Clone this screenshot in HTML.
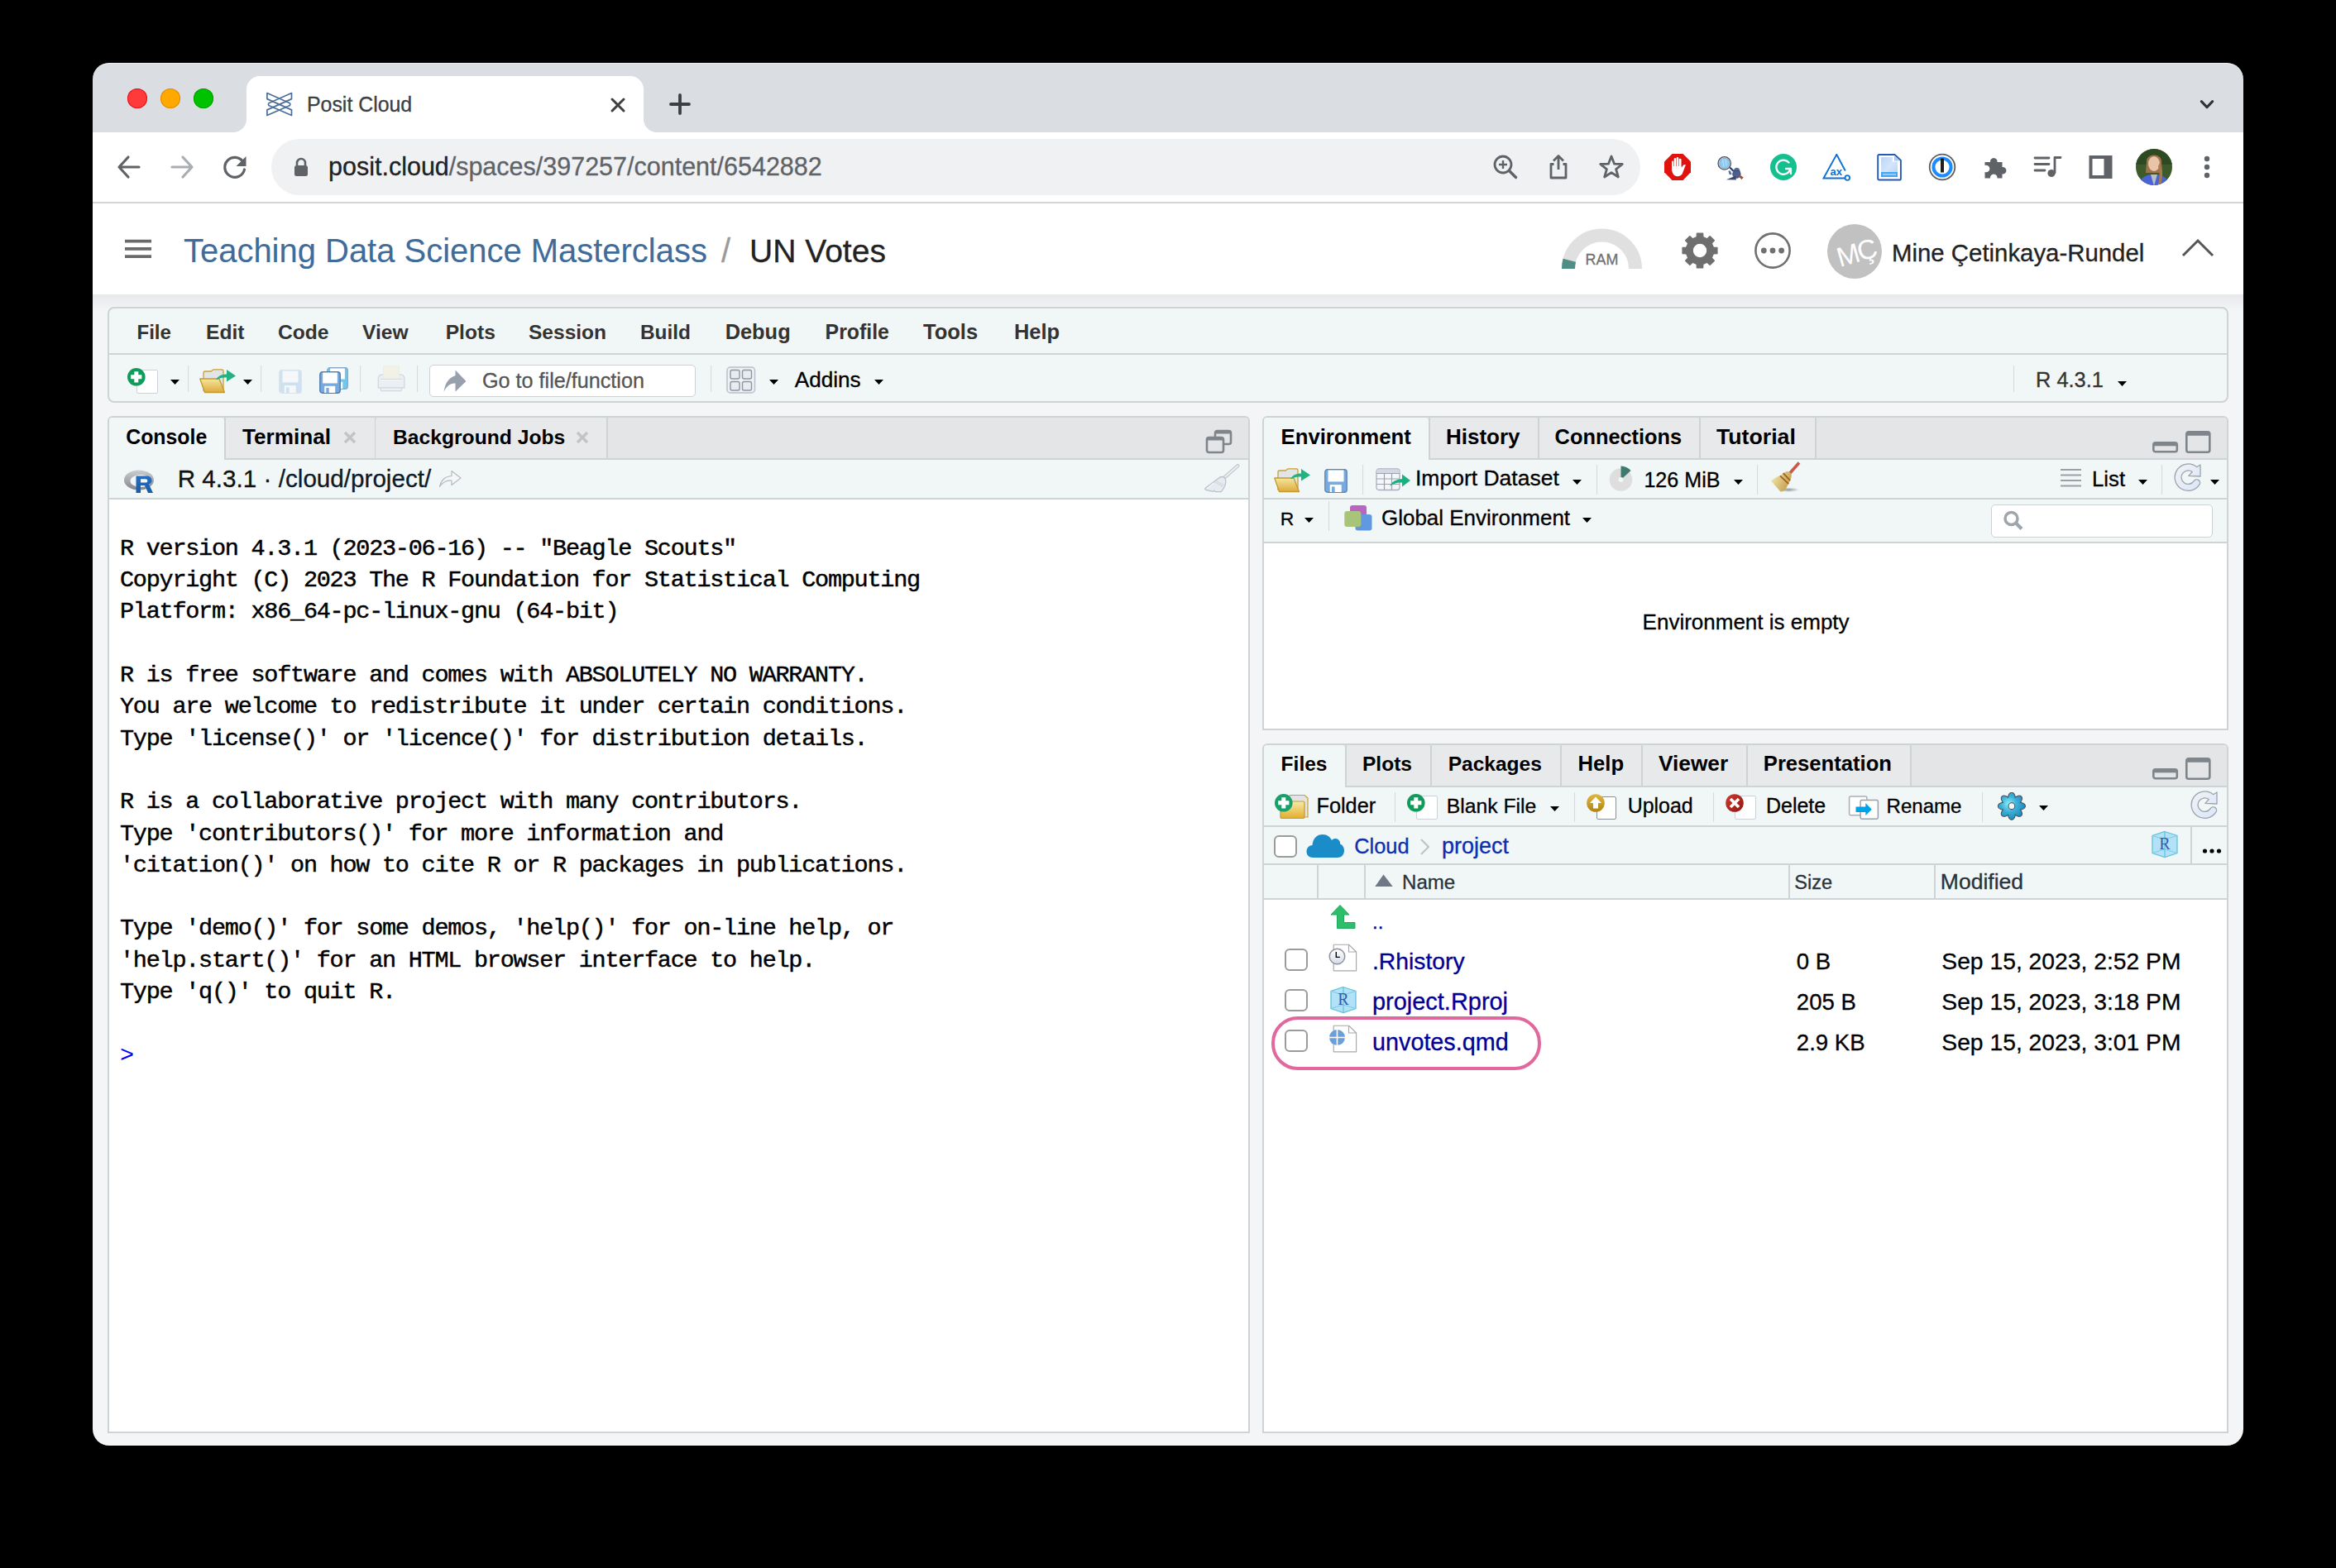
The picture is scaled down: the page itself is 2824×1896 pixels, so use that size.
<!DOCTYPE html><html><head><meta charset="utf-8"><style>html,body{margin:0;padding:0;width:2824px;height:1896px;overflow:hidden;background:#000;position:relative}</style></head><body><div style="position:absolute;left:112px;top:76px;width:2600px;height:84px;background:#DADDE1;border-radius:20px 20px 0 0;box-shadow:inset 0 1px 0 rgba(255,255,255,0.55)"></div>
<div style="position:absolute;left:112px;top:160px;width:2600px;height:84px;background:#fff"></div>
<div style="position:absolute;left:112px;top:244px;width:2600px;height:2px;background:#D3D5D8"></div>
<div style="position:absolute;left:154px;top:107px;width:24px;height:24px;background:#FE3A3A;border-radius:50%;box-shadow:inset 0 0 0 1px #E2131C"></div>
<div style="position:absolute;left:194px;top:107px;width:24px;height:24px;background:#FEA800;border-radius:50%;box-shadow:inset 0 0 0 1px #E48A00"></div>
<div style="position:absolute;left:234px;top:107px;width:24px;height:24px;background:#00C300;border-radius:50%;box-shadow:inset 0 0 0 1px #009D00"></div>
<div style="position:absolute;left:298px;top:92px;width:480px;height:68px;background:#fff;border-radius:16px 16px 0 0"></div>
<svg style="position:absolute;left:282px;top:144px;" width="16" height="16" viewBox="0 0 16 16"><path d="M16 0 V16 H0 A16 16 0 0 0 16 0Z" fill="#fff"/></svg>
<svg style="position:absolute;left:778px;top:144px;" width="16" height="16" viewBox="0 0 16 16"><path d="M0 0 V16 H16 A16 16 0 0 1 0 0Z" fill="#fff"/></svg>
<svg style="position:absolute;left:321px;top:111px;" width="34" height="30" viewBox="0 0 34 30"><path d="M1.9,1.5 L29.35,13.8 Q30.4,15.15 29.35,16.5 L1.9,28.5 V21.85 L31.5,8.6 V1.5 L3.9,13.8 Q2.8,15.15 3.9,16.5 L31.5,28.5 V21.85 L1.9,8.6 Z" fill="none" stroke="#4C6F99" stroke-width="1.7" stroke-linejoin="round"/></svg>
<div style="position:absolute;left:371.00px;top:114px;font:400 24.88px/25px 'Liberation Sans',sans-serif;color:#3C4043;white-space:pre;letter-spacing:0px;-webkit-text-stroke:0.3px #3C4043;">Posit Cloud</div>
<svg style="position:absolute;left:736px;top:116px;" width="22" height="22" viewBox="0 0 22 22"><path d="M4 4 L18 18 M18 4 L4 18" stroke="#3C4043" stroke-width="3" stroke-linecap="round"/></svg>
<svg style="position:absolute;left:808px;top:112px;" width="28" height="28" viewBox="0 0 28 28"><path d="M14 3 V25 M3 14 H25" stroke="#3C4043" stroke-width="3.8" stroke-linecap="round"/></svg>
<svg style="position:absolute;left:2655px;top:118px;" width="26" height="16" viewBox="0 0 26 16"><path d="M6.3 4.6 L13 11.6 L19.7 4.6" fill="none" stroke="#2F3337" stroke-width="3" stroke-linecap="round" stroke-linejoin="round"/></svg>
<svg style="position:absolute;left:140px;top:186px;" width="32" height="32" viewBox="0 0 32 32"><path d="M28 16 H5 M15 4 L4 16 L15 28" fill="none" stroke="#5F6368" stroke-width="3.2" stroke-linecap="round" stroke-linejoin="round"/></svg>
<svg style="position:absolute;left:204px;top:186px;" width="32" height="32" viewBox="0 0 32 32"><path d="M4 16 H27 M17 4 L28 16 L17 28" fill="none" stroke="#AAADB1" stroke-width="3.2" stroke-linecap="round" stroke-linejoin="round"/></svg>
<svg style="position:absolute;left:268px;top:186px;" width="34" height="32" viewBox="0 0 34 32"><path d="M26 10 A12 12 0 1 0 27.5 19" fill="none" stroke="#5F6368" stroke-width="3.2" stroke-linecap="round"/><path d="M29.5 3 V15 H17.5 Z" fill="#5F6368"/></svg>
<div style="position:absolute;left:328px;top:168px;width:1655px;height:68px;background:#EFF1F3;border-radius:34px"></div>
<svg style="position:absolute;left:354px;top:190px;" width="20" height="24" viewBox="0 0 20 24"><path d="M5 10 V7 A5 5 0 0 1 15 7 V10" fill="none" stroke="#5F6368" stroke-width="2.6"/><rect x="2" y="10" width="16" height="13" rx="2.5" fill="#5F6368"/></svg>
<div style="position:absolute;left:397.00px;top:186px;font:400 30.50px/31px 'Liberation Sans',sans-serif;color:#202124;white-space:pre;letter-spacing:0px;-webkit-text-stroke:0.3px #202124;">posit.cloud</div>
<div style="position:absolute;left:542.66px;top:186px;font:400 30.50px/31px 'Liberation Sans',sans-serif;color:#5F6368;white-space:pre;letter-spacing:0px;-webkit-text-stroke:0.3px #5F6368;">/spaces/397257/content/6542882</div>
<svg style="position:absolute;left:1804px;top:186px;" width="32" height="32" viewBox="0 0 32 32"><circle cx="13" cy="13" r="10" fill="none" stroke="#5F6368" stroke-width="2.8"/><path d="M13 8 V18 M8 13 H18" stroke="#5F6368" stroke-width="2.4"/><path d="M20.5 20.5 L28.5 28.5" stroke="#5F6368" stroke-width="3.4" stroke-linecap="round"/></svg>
<svg style="position:absolute;left:1870px;top:186px;" width="28" height="32" viewBox="0 0 28 32"><path d="M14 3 V19 M8 8.5 L14 2.5 L20 8.5" fill="none" stroke="#5F6368" stroke-width="2.8" stroke-linejoin="round"/><path d="M8.5 12.5 H5 V29 H23 V12.5 H19.5" fill="none" stroke="#5F6368" stroke-width="2.8" stroke-linejoin="round"/></svg>
<svg style="position:absolute;left:1932px;top:186px;" width="32" height="32" viewBox="0 0 32 32"><path d="M16 3 L19.6 12.2 L29.3 12.5 L21.6 18.6 L24.3 28 L16 22.6 L7.7 28 L10.4 18.6 L2.7 12.5 L12.4 12.2 Z" fill="none" stroke="#5F6368" stroke-width="2.8" stroke-linejoin="round"/></svg>
<svg style="position:absolute;left:2012px;top:186px;" width="32" height="32" viewBox="0 0 32 32"><path d="M9.5 0 H22.5 L32 9.5 V22.3 L22.5 32 H9.5 L0 22.3 V9.5 Z" fill="#E0130F"/><g fill="#fff"><rect x="9" y="8.6" width="2.3" height="12" rx="1.15"/><rect x="11.75" y="4.9" width="2.45" height="15" rx="1.2"/><rect x="14.7" y="3.9" width="2.5" height="16" rx="1.25"/><rect x="17.7" y="5.7" width="2.85" height="14" rx="1.4"/><path d="M9 14.9 H20.55 V16.9 L23 13.6 Q24.6 12.5 25.9 13.2 L21.7 24.2 Q19.6 27.3 15.6 27.2 Q11.8 27.1 10.2 23.6 Q9 21 9 18 Z"/></g></svg>
<svg style="position:absolute;left:2074px;top:186px;" width="36" height="34" viewBox="0 0 36 34"><circle cx="10.7" cy="11.4" r="7.7" fill="#DCE7F7" stroke="#4A4F5A" stroke-width="1.3"/><circle cx="10.7" cy="11.4" r="6.1" fill="#8CCDF0" stroke="#6E8FB8" stroke-width="0.6"/><path d="M8.5 6.5 L9.8 15.5 M12 6.3 L13.2 14.5" stroke="#C9E8FA" stroke-width="1" opacity="0.8"/><path d="M17.2 16.5 L21.8 21" stroke="#2C3E6B" stroke-width="2.3"/><path d="M15.4 20.8 Q16.8 19.4 18.3 21.5 L19.6 24.6 Q18 26.2 16.4 24.6Z" fill="#5F709E"/><ellipse cx="25.6" cy="21.3" rx="4" ry="4.6" fill="#5C6D9B"/><circle cx="25.4" cy="24.6" r="4.7" fill="#4F5F8C" stroke="#2E3B63" stroke-width="0.8"/><path d="M12.8 31.3 L23.8 26.8 L25 31.6 Z" fill="#3C4A72"/><path d="M29.4 25.4 L33.8 28.6 L31.4 31.1 L28.4 28 Z" fill="#A9502A"/></svg>
<svg style="position:absolute;left:2140px;top:186px;" width="32" height="32" viewBox="0 0 32 32"><circle cx="16" cy="16" r="16" fill="#15C08F"/><path d="M22.5 10.5 A8.6 8.6 0 1 0 24.4 18" fill="none" stroke="#fff" stroke-width="2.3" stroke-linecap="round"/><path d="M19 18 H25 V24" fill="none" stroke="#fff" stroke-width="2.3" stroke-linecap="round" stroke-linejoin="round"/></svg>
<svg style="position:absolute;left:2203px;top:186px;" width="36" height="34" viewBox="0 0 36 34"><path d="M27.8 20.5 L17.3 0.8 L1.5 29.5 H27" fill="none" stroke="#0E6FD2" stroke-width="1.9" stroke-linejoin="miter"/><circle cx="30.3" cy="29" r="2.8" fill="none" stroke="#0E6FD2" stroke-width="1.8"/><text x="9.6" y="25.8" font-family="Liberation Sans" font-weight="700" font-size="13" fill="#0E6FD2">ax</text></svg>
<svg style="position:absolute;left:2269px;top:186px;" width="30" height="33" viewBox="0 0 30 33"><defs><linearGradient id="dg" x1="0" y1="0" x2="1" y2="1"><stop offset="0" stop-color="#BCD6F6"/><stop offset="0.5" stop-color="#D4E5FB"/><stop offset="1" stop-color="#B3D0F3"/></linearGradient></defs><path d="M1.2,2.6 Q1.2,1 2.8,1 H21.5 L28.9,7.8 V29.9 Q28.9,31.5 27.3,31.5 H2.8 Q1.2,31.5 1.2,29.9 Z" fill="#fff" stroke="#2459B8" stroke-width="1.9"/><path d="M5,4 H18.8 V9.6 H25 V28 H5Z" fill="url(#dg)"/><path d="M21 2 L28 8.5 H21Z" fill="#A9CBF2"/><rect x="5" y="22" width="20" height="6" fill="#42A5F5"/><rect x="7" y="24" width="16" height="1.7" fill="#9AD4FF"/></svg>
<svg style="position:absolute;left:2331px;top:185px;" width="34" height="34" viewBox="0 0 34 34"><circle cx="17" cy="17" r="15.3" fill="#fff" stroke="#5C5C5C" stroke-width="1.8"/><circle cx="17" cy="17" r="10.6" fill="#fff" stroke="#1A8CFF" stroke-width="4"/><rect x="15" y="6.5" width="4" height="17" fill="#1F1F1F"/></svg>
<svg style="position:absolute;left:2397px;top:186px;" width="32" height="32" viewBox="0 0 32 32"><path d="M2.5 10 H9 A4.3 4.3 0 1 1 17.5 10 H23.5 V16 A4.3 4.3 0 1 1 23.5 24.5 V29.5 H17.5 A4.3 4.3 0 1 0 9 29.5 H2.5 V22 A4.3 4.3 0 1 0 2.5 14 Z" fill="#5F6368"/></svg>
<svg style="position:absolute;left:2458px;top:188px;" width="36" height="28" viewBox="0 0 36 28"><path d="M2 3 H19 M2 10.5 H19 M2 18 H14" stroke="#5F6368" stroke-width="2.8" stroke-linecap="round"/><path d="M26 21 V2.5 H33" fill="none" stroke="#5F6368" stroke-width="2.8" stroke-linecap="round" stroke-linejoin="round"/><circle cx="22" cy="21.5" r="4.6" fill="#5F6368"/></svg>
<svg style="position:absolute;left:2524px;top:186px;" width="32" height="32" viewBox="0 0 32 32"><rect x="1.5" y="2" width="28" height="28" fill="#5F6368"/><rect x="5.5" y="6" width="14" height="20" fill="#fff"/></svg>
<svg style="position:absolute;left:2581px;top:179px;" width="46" height="46" viewBox="0 0 46 46"><defs><clipPath id="av"><circle cx="23" cy="23" r="22"/></clipPath></defs><g clip-path="url(#av)"><rect width="46" height="46" fill="#3C5A2A"/><rect x="0" y="0" width="46" height="20" fill="#2E4A22"/><path d="M14 16 C14 6 32 6 32 16 L33 30 L13 30Z" fill="#9C7550"/><ellipse cx="23" cy="19" rx="7" ry="9" fill="#E9C4A8"/><path d="M3 46 C6 35 14 32 23 32 C32 32 40 35 43 46Z" fill="#4A63D6"/><path d="M19 32 L23 46 L27 32Z" fill="#B8BDC8"/><path d="M30 18 C34 26 34 36 31 44 L28 44 C30 36 30 28 28 22Z" fill="#A77A4E"/></g></svg>
<svg style="position:absolute;left:2662px;top:186px;" width="12" height="32" viewBox="0 0 12 32"><circle cx="6" cy="6" r="3.2" fill="#5F6368"/><circle cx="6" cy="16" r="3.2" fill="#5F6368"/><circle cx="6" cy="26" r="3.2" fill="#5F6368"/></svg>
<div style="position:absolute;left:112px;top:246px;width:2600px;height:110px;background:#fff"></div>
<div style="position:absolute;left:112px;top:356px;width:2600px;height:1392px;background:#F4F5F7;border-radius:0 0 20px 20px"></div>
<div style="position:absolute;left:112px;top:356px;width:2600px;height:20px;background:linear-gradient(#E7E8EB,#F4F5F7)"></div>
<svg style="position:absolute;left:150px;top:286px;" width="34" height="28" viewBox="0 0 34 28"><path d="M1 5.7 H33 M1 14.9 H33 M1 24.1 H33" stroke="#6A6A6A" stroke-width="3.8"/></svg>
<div style="position:absolute;left:222.00px;top:283px;font:400 39.96px/40px 'Liberation Sans',sans-serif;color:#3F6C9B;white-space:pre;letter-spacing:0px;-webkit-text-stroke:0.1px #3F6C9B;">Teaching Data Science Masterclass</div>
<div style="position:absolute;left:872.00px;top:283px;font:400 40.00px/40px 'Liberation Sans',sans-serif;color:#9A9A9A;white-space:pre;letter-spacing:0px;-webkit-text-stroke:0.3px #9A9A9A;">/</div>
<div style="position:absolute;left:906.00px;top:284px;font:400 39.06px/39px 'Liberation Sans',sans-serif;color:#222;white-space:pre;letter-spacing:0px;-webkit-text-stroke:0.3px #222;">UN Votes</div>
<svg style="position:absolute;left:1880px;top:270px;" width="112" height="62" viewBox="0 0 112 62"><path d="M16 55 A40.5 40.5 0 0 1 97 55" fill="none" stroke="#E0E0E0" stroke-width="16"/><path d="M16 55 A40.5 40.5 0 0 1 17.3 44.8" fill="none" stroke="#4E8F85" stroke-width="16"/></svg>
<div style="position:absolute;left:1916.60px;top:305px;font:400 17.88px/18px 'Liberation Sans',sans-serif;color:#707070;white-space:pre;letter-spacing:0px;-webkit-text-stroke:0.3px #707070;">RAM</div>
<svg style="position:absolute;left:2032px;top:280px;" width="46" height="46" viewBox="0 0 46 46"><path d="M19.34,2.02 L26.66,2.02 L26.92,6.66 L31.78,8.68 L35.25,5.57 L40.43,10.75 L37.32,14.22 L39.34,19.08 L43.98,19.34 L43.98,26.66 L39.34,26.92 L37.32,31.78 L40.43,35.25 L35.25,40.43 L31.78,37.32 L26.92,39.34 L26.66,43.98 L19.34,43.98 L19.08,39.34 L14.22,37.32 L10.75,40.43 L5.57,35.25 L8.68,31.78 L6.66,26.92 L2.02,26.66 L2.02,19.34 L6.66,19.08 L8.68,14.22 L5.57,10.75 L10.75,5.57 L14.22,8.68 L19.08,6.66 Z M31.8,23 A8.8 8.8 0 1 0 14.2,23 A8.8 8.8 0 1 0 31.8,23Z" fill="#6E6E6E" fill-rule="evenodd" stroke="#6E6E6E" stroke-width="1.2" stroke-linejoin="round"/></svg>
<svg style="position:absolute;left:2120px;top:280px;" width="46" height="46" viewBox="0 0 46 46"><circle cx="23" cy="23" r="20.6" fill="none" stroke="#707070" stroke-width="2.6"/><circle cx="12.3" cy="23" r="3.4" fill="#707070"/><circle cx="23" cy="23" r="3.4" fill="#707070"/><circle cx="33.6" cy="23" r="3.4" fill="#707070"/></svg>
<div style="position:absolute;left:2209px;top:271px;width:66px;height:66px;background:#C1C1C1;border-radius:50%"></div>
<div style="position:absolute;left:2214px;top:286px;width:60px;height:40px;font:400 33px/40px 'Liberation Sans',sans-serif;color:#fff;transform:rotate(-16deg);transform-origin:50% 50%;text-align:center;letter-spacing:-2px">MÇ</div>
<div style="position:absolute;left:2287.00px;top:291px;font:400 29.38px/29px 'Liberation Sans',sans-serif;color:#222;white-space:pre;letter-spacing:0px;-webkit-text-stroke:0.3px #222;">Mine Çetinkaya-Rundel</div>
<svg style="position:absolute;left:2636px;top:286px;" width="42" height="28" viewBox="0 0 42 28"><path d="M3 23 L21 5 L39 23" fill="none" stroke="#555" stroke-width="3"/></svg>
<div style="position:absolute;left:130px;top:371px;width:2564px;height:116px;background:#F1F6F6;border:2px solid #CED3D6;border-radius:8px;box-sizing:border-box"></div>
<div style="position:absolute;left:132px;top:427px;width:2560px;height:2px;background:#CED3D6"></div>
<div style="position:absolute;left:165.50px;top:390px;font:700 24.06px/24px 'Liberation Sans',sans-serif;color:#333;white-space:pre;letter-spacing:0px;">File</div>
<div style="position:absolute;left:249.00px;top:389px;font:700 24.60px/25px 'Liberation Sans',sans-serif;color:#333;white-space:pre;letter-spacing:0px;">Edit</div>
<div style="position:absolute;left:336.00px;top:389px;font:700 24.60px/25px 'Liberation Sans',sans-serif;color:#333;white-space:pre;letter-spacing:0px;">Code</div>
<div style="position:absolute;left:438.00px;top:389px;font:700 24.60px/25px 'Liberation Sans',sans-serif;color:#333;white-space:pre;letter-spacing:0px;">View</div>
<div style="position:absolute;left:538.70px;top:389px;font:700 24.60px/25px 'Liberation Sans',sans-serif;color:#333;white-space:pre;letter-spacing:0px;">Plots</div>
<div style="position:absolute;left:639.00px;top:389px;font:700 24.54px/25px 'Liberation Sans',sans-serif;color:#333;white-space:pre;letter-spacing:0px;">Session</div>
<div style="position:absolute;left:774.00px;top:390px;font:700 24.40px/24px 'Liberation Sans',sans-serif;color:#333;white-space:pre;letter-spacing:0px;">Build</div>
<div style="position:absolute;left:876.70px;top:389px;font:700 25.38px/25px 'Liberation Sans',sans-serif;color:#333;white-space:pre;letter-spacing:0px;">Debug</div>
<div style="position:absolute;left:997.60px;top:389px;font:700 24.85px/25px 'Liberation Sans',sans-serif;color:#333;white-space:pre;letter-spacing:0px;">Profile</div>
<div style="position:absolute;left:1116.00px;top:388px;font:700 25.52px/26px 'Liberation Sans',sans-serif;color:#333;white-space:pre;letter-spacing:0px;">Tools</div>
<div style="position:absolute;left:1226.00px;top:389px;font:700 25.40px/25px 'Liberation Sans',sans-serif;color:#333;white-space:pre;letter-spacing:0px;">Help</div>
<div style="position:absolute;left:165px;top:447px;width:26px;height:29px;background:#fff;border:1.5px solid #CDD2DA;border-radius:2px;box-sizing:border-box"></div>
<svg style="position:absolute;left:152.89999999999998px;top:443.7px;" width="23.6" height="23.6" viewBox="0 0 23.6 23.6"><circle cx="11.8" cy="11.8" r="10.8" fill="#0F9B5A"/><path d="M11.8 5.200000000000001 V18.4 M5.200000000000001 11.8 H18.4" stroke="#fff" stroke-width="5"/></svg>
<svg style="position:absolute;left:206px;top:459px;" width="11" height="6" viewBox="0 0 11 6"><path d="M0 0 H11 L5.5 6Z" fill="#000"/></svg>
<div style="position:absolute;left:227px;top:442px;width:2px;height:32px;background:linear-gradient(90deg,#C9CED2,#FFFFFF)"></div>
<svg style="position:absolute;left:241px;top:446px;" width="46" height="30" viewBox="0 0 46 30"><defs><linearGradient id="fg" x1="0" y1="0" x2="0" y2="1"><stop offset="0" stop-color="#F5E6A0"/><stop offset="1" stop-color="#DDAA3A"/></linearGradient></defs><path d="M5 26 V5 Q5 3 7 3 H14 L17 0.8 H27 Q29 0.8 29 3 V26Z" fill="#E3E4E6" stroke="#C9A032" stroke-width="1.3"/><path d="M0.8 12 H24 L30.5 28.5 H6.5Z" fill="url(#fg)" stroke="#C29A30" stroke-width="1.3" stroke-linejoin="round"/><path d="M20 13 Q24 6 33 6.5 V1 L44 8.5 L33 15.5 V10.5 Q25 10 22 13Z" fill="#23B383"/></svg>
<svg style="position:absolute;left:294px;top:459px;" width="11" height="6" viewBox="0 0 11 6"><path d="M0 0 H11 L5.5 6Z" fill="#000"/></svg>
<div style="position:absolute;left:315px;top:442px;width:2px;height:32px;background:linear-gradient(90deg,#C9CED2,#FFFFFF)"></div>
<svg style="position:absolute;left:337px;top:447px;" width="28" height="29" viewBox="0 0 28 29"><rect x="0.8" y="0.8" width="26.4" height="27.4" rx="3" fill="#CFE1F1" stroke="#D6E3EE" stroke-width="1.4"/><rect x="4.48" y="1.5" width="19.040000000000003" height="13.92" fill="#F4F8FB"/><rect x="6.72" y="19.14" width="14.0" height="8.860000000000001" fill="#F4F8FB"/><rect x="8.96" y="21.46" width="3.64" height="6.54" fill="#CFE1F1"/></svg>
<svg style="position:absolute;left:395px;top:444px;" width="26" height="27" viewBox="0 0 26 27"><rect x="0.8" y="0.8" width="24.4" height="25.4" rx="3" fill="#6FC9EF" stroke="#8AA6C2" stroke-width="1.4"/><rect x="4.16" y="1.5" width="17.68" height="12.959999999999999" fill="#fff"/><rect x="6.24" y="17.82" width="13.0" height="8.180000000000001" fill="#fff"/><rect x="8.32" y="19.98" width="3.38" height="6.0200000000000005" fill="#6FC9EF"/></svg>
<svg style="position:absolute;left:386px;top:449px;" width="26" height="27" viewBox="0 0 26 27"><rect x="0.8" y="0.8" width="24.4" height="25.4" rx="3" fill="#77A9DC" stroke="#4F7CAE" stroke-width="1.4"/><rect x="4.16" y="1.5" width="17.68" height="12.959999999999999" fill="#fff"/><rect x="6.24" y="17.82" width="13.0" height="8.180000000000001" fill="#fff"/><rect x="8.32" y="19.98" width="3.38" height="6.0200000000000005" fill="#77A9DC"/></svg>
<div style="position:absolute;left:435px;top:442px;width:2px;height:32px;background:linear-gradient(90deg,#C9CED2,#FFFFFF)"></div>
<svg style="position:absolute;left:456px;top:442px;" width="34" height="32" viewBox="0 0 34 32"><path d="M1.3 27 V16 Q1.3 11 6 10.8 H28 Q32.8 11 32.8 16 V27 Z" fill="#EBEFF4" stroke="#D3D8DE" stroke-width="1.3"/><rect x="7.6" y="0.6" width="18.6" height="15.4" rx="0.8" fill="#F2F1E6" stroke="#ECEBDD" stroke-width="0.8"/><path d="M4 16.6 H30" stroke="#D3D8DF" stroke-width="1"/><path d="M4 17.8 H30" stroke="#F8FAFC" stroke-width="1"/><rect x="4.4" y="27" width="25" height="3.6" rx="0.8" fill="#EDF0F4" stroke="#D3D8DE" stroke-width="1.1"/></svg>
<div style="position:absolute;left:504px;top:442px;width:2px;height:32px;background:linear-gradient(90deg,#C9CED2,#FFFFFF)"></div>
<div style="position:absolute;left:519px;top:441px;width:322px;height:39px;background:#fff;border:1.6px solid #CDD2D5;border-radius:5px;box-sizing:border-box"></div>
<svg style="position:absolute;left:535px;top:446px;" width="32" height="30" viewBox="0 0 32 30"><path d="M1.5 28 C3 18 7 11 14.5 8.5 C16 8 17.5 8 15.5 8 V1.5 L28.5 15 L15.5 27.5 V17.5 C9 17 4.5 21.5 1.5 28Z" fill="#98A0AD"/></svg>
<div style="position:absolute;left:583.00px;top:448px;font:400 25.18px/25px 'Liberation Sans',sans-serif;color:#555;white-space:pre;letter-spacing:0px;-webkit-text-stroke:0.3px #555;">Go to file/function</div>
<div style="position:absolute;left:859px;top:442px;width:2px;height:32px;background:linear-gradient(90deg,#C9CED2,#FFFFFF)"></div>
<svg style="position:absolute;left:878px;top:443px;" width="36" height="33" viewBox="0 0 36 33"><rect x="1" y="1" width="33.5" height="31" rx="4" fill="#EEF1F4" stroke="#BAC0C8" stroke-width="1.5"/><rect x="5" y="4.5" width="11" height="10.5" rx="2" fill="#E8ECF0" stroke="#8D96A2" stroke-width="1.4"/><rect x="19.5" y="4.5" width="11" height="10.5" rx="2" fill="#E8ECF0" stroke="#8D96A2" stroke-width="1.4"/><rect x="5" y="18.5" width="11" height="10.5" rx="2" fill="#E8ECF0" stroke="#8D96A2" stroke-width="1.4"/><rect x="19.5" y="18.5" width="11" height="10.5" rx="2" fill="#E8ECF0" stroke="#8D96A2" stroke-width="1.4"/></svg>
<svg style="position:absolute;left:930px;top:459px;" width="11" height="6" viewBox="0 0 11 6"><path d="M0 0 H11 L5.5 6Z" fill="#000"/></svg>
<div style="position:absolute;left:960.80px;top:446px;font:400 26.13px/26px 'Liberation Sans',sans-serif;color:#000;white-space:pre;letter-spacing:0px;-webkit-text-stroke:0.3px #000;">Addins</div>
<svg style="position:absolute;left:1057px;top:459px;" width="11" height="6" viewBox="0 0 11 6"><path d="M0 0 H11 L5.5 6Z" fill="#000"/></svg>
<div style="position:absolute;left:2434px;top:442px;width:2px;height:32px;background:linear-gradient(90deg,#C9CED2,#FFFFFF)"></div>
<div style="position:absolute;left:2461.00px;top:447px;font:400 25.43px/25px 'Liberation Sans',sans-serif;color:#333;white-space:pre;letter-spacing:0px;-webkit-text-stroke:0.3px #333;">R 4.3.1</div>
<svg style="position:absolute;left:2560px;top:461px;" width="11" height="6" viewBox="0 0 11 6"><path d="M0 0 H11 L5.5 6Z" fill="#000"/></svg>
<div style="position:absolute;left:130px;top:503px;width:1381px;height:1230px;background:#fff;border:2px solid #CED3D6;border-radius:6px 6px 0 0;box-sizing:border-box;overflow:hidden"></div>
<div style="position:absolute;left:132px;top:505px;width:1377px;height:49px;background:#E4E5E7;border-radius:4px 4px 0 0"></div>
<div style="position:absolute;left:132px;top:554px;width:1377px;height:2px;background:#CED3D6"></div>
<div style="position:absolute;left:132px;top:505px;width:139px;height:51px;background:#F1F6F6;border-radius:4px 4px 0 0"></div>
<div style="position:absolute;left:271px;top:505px;width:2px;height:49px;background:#CED3D6;border-radius:2px 2px 0 0"></div>
<div style="position:absolute;left:273px;top:505px;width:179.5px;height:49px;background:#E8E9EB;border-radius:4px 4px 0 0"></div>
<div style="position:absolute;left:452.5px;top:505px;width:2.0px;height:49px;background:#CED3D6;border-radius:2px 2px 0 0"></div>
<div style="position:absolute;left:454px;top:505px;width:279px;height:49px;background:#E8E9EB;border-radius:4px 4px 0 0"></div>
<div style="position:absolute;left:733px;top:505px;width:2px;height:49px;background:#CED3D6;border-radius:2px 2px 0 0"></div>
<div style="position:absolute;left:132px;top:556px;width:1377px;height:46px;background:#F1F6F6"></div>
<div style="position:absolute;left:132px;top:602px;width:1377px;height:2px;background:#CED3D6"></div>
<div style="position:absolute;left:152.20px;top:516px;font:700 24.87px/25px 'Liberation Sans',sans-serif;color:#000;white-space:pre;letter-spacing:0px;">Console</div>
<div style="position:absolute;left:293.00px;top:515px;font:700 26.14px/26px 'Liberation Sans',sans-serif;color:#000;white-space:pre;letter-spacing:0px;">Terminal</div>
<div style="position:absolute;left:475.00px;top:516px;font:700 24.66px/25px 'Liberation Sans',sans-serif;color:#000;white-space:pre;letter-spacing:0px;">Background Jobs</div>
<svg style="position:absolute;left:414.5px;top:521px;" width="16" height="16" viewBox="0 0 16 16"><path d="M2 2 L14 14 M14 2 L2 14" stroke="#C4C4C4" stroke-width="3.4"/></svg>
<svg style="position:absolute;left:695.5px;top:521px;" width="16" height="16" viewBox="0 0 16 16"><path d="M2 2 L14 14 M14 2 L2 14" stroke="#C4C4C4" stroke-width="3.4"/></svg>
<svg style="position:absolute;left:1456px;top:518px;" width="36" height="32" viewBox="0 0 36 32"><rect x="13" y="3" width="19" height="16" rx="2.5" fill="none" stroke="#7E868C" stroke-width="2.6"/><rect x="3" y="11" width="20" height="18" rx="2.5" fill="#E4E5E7" stroke="#7E868C" stroke-width="2.6"/><rect x="13" y="3" width="19" height="3.5" fill="#7E868C"/><rect x="3" y="11" width="20" height="3.5" fill="#7E868C"/></svg>
<svg style="position:absolute;left:148px;top:566px;" width="40" height="32" viewBox="0 0 40 32"><defs><linearGradient id="rg" x1="0" y1="0" x2="0" y2="1"><stop offset="0" stop-color="#CBCED0"/><stop offset="1" stop-color="#84858B"/></linearGradient><linearGradient id="rb" x1="0" y1="0" x2="0" y2="1"><stop offset="0" stop-color="#276DC3"/><stop offset="1" stop-color="#165CAA"/></linearGradient></defs><ellipse cx="20" cy="14.5" rx="18" ry="12" fill="url(#rg)"/><ellipse cx="22" cy="15.5" rx="12.5" ry="7.5" fill="#F1F6F6"/><path d="M16.5 9.5 H28.5 C33 9.5 35.5 11.5 35.5 15 C35.5 17.5 34 19 32 19.8 L37 30 H31 L27 21 H22 V30 H16.5Z M22 13.3 V17.5 H28 C29.5 17.5 30.3 16.7 30.3 15.4 C30.3 14 29.5 13.3 28 13.3Z" fill="url(#rb)" fill-rule="evenodd"/></svg>
<div style="position:absolute;left:214.70px;top:564px;font:400 29.63px/30px 'Liberation Sans',sans-serif;color:#111;white-space:pre;letter-spacing:0px;-webkit-text-stroke:0.3px #111;">R 4.3.1 · </div>
<div style="position:absolute;left:336.77px;top:564px;font:400 29.63px/30px 'Liberation Sans',sans-serif;color:#0B1B2B;white-space:pre;letter-spacing:0px;-webkit-text-stroke:0.3px #0B1B2B;">/cloud/project/</div>
<svg style="position:absolute;left:530px;top:567px;" width="29" height="23" viewBox="0 0 29 23"><path d="M1.5 21.5 C3 14 8 9 16 8.5 V2.5 L27 11 L16 19.5 V14 C10 13.5 5 16.5 1.5 21.5Z" fill="#F4F6F8" stroke="#B5BAC2" stroke-width="1.2" stroke-linejoin="round"/></svg>
<svg style="position:absolute;left:1454px;top:560px;" width="46" height="38" viewBox="0 0 46 38"><path d="M42.4 3.2 L26.3 17.3" stroke="#BFC6CC" stroke-width="4.2" stroke-linecap="round"/><path d="M42.4 3.2 L26.3 17.3" stroke="#ECEFF4" stroke-width="2" stroke-linecap="round"/><path d="M25.8 16.8 Q21.5 15.8 19.2 18.3 L3.2 30.2 Q2 32 4.6 32.6 L12.4 34.4 L13.6 33.2 L15.2 34.6 H22 Q24.2 33 26.8 27.2 Q28.6 22.2 27.2 19.2 Z" fill="#E6EAF1" stroke="#BAC2C9" stroke-width="1.3" stroke-linejoin="round"/><path d="M14.8 23 L24.2 28.4 M16.2 21.6 L25.4 26.8" stroke="#D3D8DE" stroke-width="1.2"/><path d="M13 24 L5 31" stroke="#fff" stroke-width="1"/></svg>
<div style="position:absolute;left:145px;top:649.8px;font:400 28.5px/28px 'Liberation Mono',monospace;letter-spacing:-1.253px;color:#000;white-space:pre;-webkit-text-stroke:0.45px #000">R version 4.3.1 (2023-06-16) -- &quot;Beagle Scouts&quot;</div>
<div style="position:absolute;left:145px;top:688.1px;font:400 28.5px/28px 'Liberation Mono',monospace;letter-spacing:-1.253px;color:#000;white-space:pre;-webkit-text-stroke:0.45px #000">Copyright (C) 2023 The R Foundation for Statistical Computing</div>
<div style="position:absolute;left:145px;top:726.4px;font:400 28.5px/28px 'Liberation Mono',monospace;letter-spacing:-1.253px;color:#000;white-space:pre;-webkit-text-stroke:0.45px #000">Platform: x86_64-pc-linux-gnu (64-bit)</div>
<div style="position:absolute;left:145px;top:803.0px;font:400 28.5px/28px 'Liberation Mono',monospace;letter-spacing:-1.253px;color:#000;white-space:pre;-webkit-text-stroke:0.45px #000">R is free software and comes with ABSOLUTELY NO WARRANTY.</div>
<div style="position:absolute;left:145px;top:841.3px;font:400 28.5px/28px 'Liberation Mono',monospace;letter-spacing:-1.253px;color:#000;white-space:pre;-webkit-text-stroke:0.45px #000">You are welcome to redistribute it under certain conditions.</div>
<div style="position:absolute;left:145px;top:879.6px;font:400 28.5px/28px 'Liberation Mono',monospace;letter-spacing:-1.253px;color:#000;white-space:pre;-webkit-text-stroke:0.45px #000">Type &#x27;license()&#x27; or &#x27;licence()&#x27; for distribution details.</div>
<div style="position:absolute;left:145px;top:956.2px;font:400 28.5px/28px 'Liberation Mono',monospace;letter-spacing:-1.253px;color:#000;white-space:pre;-webkit-text-stroke:0.45px #000">R is a collaborative project with many contributors.</div>
<div style="position:absolute;left:145px;top:994.5px;font:400 28.5px/28px 'Liberation Mono',monospace;letter-spacing:-1.253px;color:#000;white-space:pre;-webkit-text-stroke:0.45px #000">Type &#x27;contributors()&#x27; for more information and</div>
<div style="position:absolute;left:145px;top:1032.8px;font:400 28.5px/28px 'Liberation Mono',monospace;letter-spacing:-1.253px;color:#000;white-space:pre;-webkit-text-stroke:0.45px #000">&#x27;citation()&#x27; on how to cite R or R packages in publications.</div>
<div style="position:absolute;left:145px;top:1109.4px;font:400 28.5px/28px 'Liberation Mono',monospace;letter-spacing:-1.253px;color:#000;white-space:pre;-webkit-text-stroke:0.45px #000">Type &#x27;demo()&#x27; for some demos, &#x27;help()&#x27; for on-line help, or</div>
<div style="position:absolute;left:145px;top:1147.7px;font:400 28.5px/28px 'Liberation Mono',monospace;letter-spacing:-1.253px;color:#000;white-space:pre;-webkit-text-stroke:0.45px #000">&#x27;help.start()&#x27; for an HTML browser interface to help.</div>
<div style="position:absolute;left:145px;top:1186.0px;font:400 28.5px/28px 'Liberation Mono',monospace;letter-spacing:-1.253px;color:#000;white-space:pre;-webkit-text-stroke:0.45px #000">Type &#x27;q()&#x27; to quit R.</div>
<div style="position:absolute;left:145px;top:1262.6px;font:400 28.5px/28px 'Liberation Mono',monospace;color:#0000FF;white-space:pre">&gt;</div>
<div style="position:absolute;left:1526px;top:503px;width:1168px;height:380px;background:#fff;border:2px solid #CED3D6;border-radius:6px 6px 0 0;box-sizing:border-box;overflow:hidden"></div>
<div style="position:absolute;left:1528px;top:505px;width:1164px;height:49px;background:#E4E5E7;border-radius:4px 4px 0 0"></div>
<div style="position:absolute;left:1528px;top:554px;width:1164px;height:2px;background:#CED3D6"></div>
<div style="position:absolute;left:1528px;top:505px;width:199px;height:51px;background:#F1F6F6;border-radius:4px 4px 0 0"></div>
<div style="position:absolute;left:1727px;top:505px;width:2px;height:49px;background:#CED3D6;border-radius:2px 2px 0 0"></div>
<div style="position:absolute;left:1729px;top:505px;width:129.5px;height:49px;background:#E8E9EB;border-radius:4px 4px 0 0"></div>
<div style="position:absolute;left:1858.5px;top:505px;width:2.0px;height:49px;background:#CED3D6;border-radius:2px 2px 0 0"></div>
<div style="position:absolute;left:1860.5px;top:505px;width:193.5px;height:49px;background:#E8E9EB;border-radius:4px 4px 0 0"></div>
<div style="position:absolute;left:2054px;top:505px;width:2px;height:49px;background:#CED3D6;border-radius:2px 2px 0 0"></div>
<div style="position:absolute;left:2056px;top:505px;width:138px;height:49px;background:#E8E9EB;border-radius:4px 4px 0 0"></div>
<div style="position:absolute;left:2194px;top:505px;width:2px;height:49px;background:#CED3D6;border-radius:2px 2px 0 0"></div>
<div style="position:absolute;left:1548.50px;top:515px;font:700 25.74px/26px 'Liberation Sans',sans-serif;color:#000;white-space:pre;letter-spacing:0px;">Environment</div>
<div style="position:absolute;left:1748.00px;top:515px;font:700 26.01px/26px 'Liberation Sans',sans-serif;color:#000;white-space:pre;letter-spacing:0px;">History</div>
<div style="position:absolute;left:1879.60px;top:516px;font:700 25.36px/25px 'Liberation Sans',sans-serif;color:#000;white-space:pre;letter-spacing:0px;">Connections</div>
<div style="position:absolute;left:2075.00px;top:515px;font:700 26.70px/27px 'Liberation Sans',sans-serif;color:#000;white-space:pre;letter-spacing:0px;">Tutorial</div>
<svg style="position:absolute;left:2602px;top:521px;" width="72" height="28" viewBox="0 0 72 28"><rect x="1.3" y="14.3" width="28.5" height="11" rx="2.5" fill="none" stroke="#7E868C" stroke-width="2.6"/><rect x="1.3" y="14.3" width="28.5" height="4" fill="#7E868C"/><rect x="41.3" y="1.3" width="28" height="24.5" rx="2.5" fill="none" stroke="#7E868C" stroke-width="2.6"/><rect x="41.3" y="1.3" width="28" height="4.5" fill="#7E868C"/></svg>
<div style="position:absolute;left:1528px;top:556px;width:1164px;height:46px;background:#F1F6F6"></div>
<div style="position:absolute;left:1528px;top:602px;width:1164px;height:2px;background:#CED3D6"></div>
<div style="position:absolute;left:1528px;top:604px;width:1164px;height:51px;background:#F1F6F6"></div>
<div style="position:absolute;left:1528px;top:655px;width:1164px;height:2px;background:#CED3D6"></div>
<svg style="position:absolute;left:1540px;top:566px;" width="46" height="30" viewBox="0 0 46 30"><defs><linearGradient id="fg" x1="0" y1="0" x2="0" y2="1"><stop offset="0" stop-color="#F5E6A0"/><stop offset="1" stop-color="#DDAA3A"/></linearGradient></defs><path d="M5 26 V5 Q5 3 7 3 H14 L17 0.8 H27 Q29 0.8 29 3 V26Z" fill="#E3E4E6" stroke="#C9A032" stroke-width="1.3"/><path d="M0.8 12 H24 L30.5 28.5 H6.5Z" fill="url(#fg)" stroke="#C29A30" stroke-width="1.3" stroke-linejoin="round"/><path d="M20 13 Q24 6 33 6.5 V1 L44 8.5 L33 15.5 V10.5 Q25 10 22 13Z" fill="#23B383"/></svg>
<svg style="position:absolute;left:1601px;top:567px;" width="28" height="29" viewBox="0 0 28 29"><rect x="0.8" y="0.8" width="26.4" height="27.4" rx="3" fill="#77AADD" stroke="#5F88B8" stroke-width="1.4"/><rect x="4.48" y="1.5" width="19.040000000000003" height="13.92" fill="#fff"/><rect x="6.72" y="19.14" width="14.0" height="8.860000000000001" fill="#fff"/><rect x="8.96" y="21.46" width="3.64" height="6.54" fill="#77AADD"/></svg>
<div style="position:absolute;left:1647px;top:562px;width:2px;height:36px;background:linear-gradient(90deg,#C9CED2,#FFFFFF)"></div>
<svg style="position:absolute;left:1663px;top:566px;" width="44" height="28" viewBox="0 0 44 28"><rect x="1" y="1" width="28" height="25.5" rx="3" fill="#F4F6FA" stroke="#A9B1BD" stroke-width="1.3"/><rect x="1.5" y="1.5" width="27" height="4.5" fill="#D3D9E0"/><path d="M1 6.5 H29 M1 13 H29 M1 19.5 H29 M10.5 6 V26.5 M19.5 6 V26.5" stroke="#9AA3B0" stroke-width="1.2"/><path d="M17 22 Q20 14 32 13 V7.5 L42 15 L32 22.5 V17.5 Q23 17 17 22Z" fill="#1BB07F"/></svg>
<div style="position:absolute;left:1711.00px;top:565.4px;font:400 26.50px/27px 'Liberation Sans',sans-serif;color:#000;white-space:pre;letter-spacing:0px;-webkit-text-stroke:0.3px #000;">Import Dataset</div>
<svg style="position:absolute;left:1900.5px;top:580px;" width="11" height="6" viewBox="0 0 11 6"><path d="M0 0 H11 L5.5 6Z" fill="#000"/></svg>
<div style="position:absolute;left:1930px;top:562px;width:2px;height:36px;background:linear-gradient(90deg,#C9CED2,#FFFFFF)"></div>
<svg style="position:absolute;left:1944px;top:562px;" width="32" height="34" viewBox="0 0 32 34"><circle cx="15.5" cy="18" r="13.8" fill="#DEDEDE"/><path d="M15.5 18 L15.5 1.5 A16.5 16.5 0 0 1 27.6 7Z" fill="#3E7A6F"/><circle cx="15.5" cy="18" r="3" fill="#F1F6F6"/></svg>
<div style="position:absolute;left:1987.40px;top:567.9px;font:400 25.10px/25px 'Liberation Sans',sans-serif;color:#000;white-space:pre;letter-spacing:0px;-webkit-text-stroke:0.3px #000;">126 MiB</div>
<svg style="position:absolute;left:2096px;top:580px;" width="11" height="6" viewBox="0 0 11 6"><path d="M0 0 H11 L5.5 6Z" fill="#000"/></svg>
<div style="position:absolute;left:2124px;top:562px;width:2px;height:36px;background:linear-gradient(90deg,#C9CED2,#FFFFFF)"></div>
<svg style="position:absolute;left:2138px;top:558px;" width="40" height="40" viewBox="0 0 40 40"><defs><linearGradient id="bhg" x1="0" y1="0.3" x2="1" y2="0.8"><stop offset="0" stop-color="#F1E6A6"/><stop offset="1" stop-color="#BE9445"/></linearGradient><radialGradient id="bsh"><stop offset="0" stop-color="#8E959C"/><stop offset="1" stop-color="#8E959C" stop-opacity="0"/></radialGradient></defs><ellipse cx="24" cy="34.2" rx="13" ry="2.8" fill="url(#bsh)"/><path d="M35.8 2.8 L26.9 12.9" stroke="#C9584C" stroke-width="3.6" stroke-linecap="square"/><path d="M22.6 12 Q27 12.5 27.8 16.5 Q28 20 25.5 24 L21.5 32 Q18 37 14.5 36.5 L3 23.5 Q6 20.5 15.5 16.3 Q19 12.3 22.6 12Z" fill="url(#bhg)"/><path d="M18.2 14.6 L25.7 22.7 M14.5 17.9 L23.8 26.6" stroke="#9A6420" stroke-width="1.8" stroke-linecap="round"/></svg>
<svg style="position:absolute;left:2490px;top:565px;" width="28" height="26" viewBox="0 0 28 26"><path d="M1 3 H26 M1 9.5 H26 M1 16 H26 M1 22.5 H26" stroke="#9AA0A6" stroke-width="1.8"/></svg>
<div style="position:absolute;left:2529.00px;top:566px;font:400 25.72px/26px 'Liberation Sans',sans-serif;color:#000;white-space:pre;letter-spacing:0px;-webkit-text-stroke:0.3px #000;">List</div>
<svg style="position:absolute;left:2584.5px;top:580px;" width="11" height="6" viewBox="0 0 11 6"><path d="M0 0 H11 L5.5 6Z" fill="#000"/></svg>
<div style="position:absolute;left:2613px;top:562px;width:2px;height:36px;background:linear-gradient(90deg,#C9CED2,#FFFFFF)"></div>
<svg style="position:absolute;left:2627px;top:560px;" width="36" height="36" viewBox="0 0 36 36"><defs><linearGradient id="rfg" x1="0" y1="0" x2="1" y2="1"><stop offset="0" stop-color="#F1F2F6"/><stop offset="1" stop-color="#DAE6F8"/></linearGradient></defs><path d="M25.25,21.67 A8.25 8.25 0 1 1 23.2,10.5 L18.9,15.4 L33,16 L33,2 L28.7,4.7 A16.2 16.2 0 1 0 31.99,25.88 A3.97 3.97 0 0 0 25.25,21.67 Z" fill="url(#rfg)" stroke="#9BA3AE" stroke-width="1.3" stroke-linejoin="round"/></svg>
<svg style="position:absolute;left:2672px;top:580px;" width="11" height="6" viewBox="0 0 11 6"><path d="M0 0 H11 L5.5 6Z" fill="#000"/></svg>
<div style="position:absolute;left:1547.70px;top:615.7px;font:400 22.92px/23px 'Liberation Sans',sans-serif;color:#000;white-space:pre;letter-spacing:0px;-webkit-text-stroke:0.3px #000;">R</div>
<svg style="position:absolute;left:1577px;top:625.5px;" width="11" height="6" viewBox="0 0 11 6"><path d="M0 0 H11 L5.5 6Z" fill="#000"/></svg>
<div style="position:absolute;left:1606px;top:606px;width:2px;height:36px;background:linear-gradient(90deg,#C9CED2,#FFFFFF)"></div>
<svg style="position:absolute;left:1624px;top:610px;" width="36" height="33" viewBox="0 0 36 33"><rect x="8" y="1" width="20" height="19.5" rx="3" fill="#B865C4"/><rect x="14.5" y="12" width="20" height="19.5" rx="3" fill="#6199E0"/><rect x="1.3" y="8" width="20" height="19" rx="3" fill="#A8C47A"/></svg>
<div style="position:absolute;left:1670.00px;top:612.7px;font:400 25.98px/26px 'Liberation Sans',sans-serif;color:#000;white-space:pre;letter-spacing:0px;-webkit-text-stroke:0.3px #000;">Global Environment</div>
<svg style="position:absolute;left:1913px;top:625.5px;" width="11" height="6" viewBox="0 0 11 6"><path d="M0 0 H11 L5.5 6Z" fill="#000"/></svg>
<div style="position:absolute;left:2407px;top:610px;width:268px;height:40px;background:#fff;border:1.6px solid #CDD2D5;border-radius:5px;box-sizing:border-box"></div>
<svg style="position:absolute;left:2420px;top:615px;" width="30" height="30" viewBox="0 0 30 30"><circle cx="11.5" cy="12" r="7.5" fill="none" stroke="#9EA5AB" stroke-width="3.4"/><path d="M17 17.5 L24 24.5" stroke="#9EA5AB" stroke-width="4.2"/></svg>
<div style="position:absolute;left:1985.60px;top:739px;font:400 26.00px/26px 'Liberation Sans',sans-serif;color:#000;white-space:pre;letter-spacing:0px;-webkit-text-stroke:0.3px #000;">Environment is empty</div>
<div style="position:absolute;left:1526px;top:899px;width:1168px;height:834px;background:#fff;border:2px solid #CED3D6;border-radius:6px 6px 0 0;box-sizing:border-box;overflow:hidden"></div>
<div style="position:absolute;left:1528px;top:901px;width:1164px;height:49px;background:#E4E5E7;border-radius:4px 4px 0 0"></div>
<div style="position:absolute;left:1528px;top:950px;width:1164px;height:2px;background:#CED3D6"></div>
<div style="position:absolute;left:1528px;top:901px;width:98px;height:51px;background:#F1F6F6;border-radius:4px 4px 0 0"></div>
<div style="position:absolute;left:1626px;top:901px;width:2px;height:49px;background:#CED3D6;border-radius:2px 2px 0 0"></div>
<div style="position:absolute;left:1628px;top:901px;width:101px;height:49px;background:#E8E9EB;border-radius:4px 4px 0 0"></div>
<div style="position:absolute;left:1729px;top:901px;width:2px;height:49px;background:#CED3D6;border-radius:2px 2px 0 0"></div>
<div style="position:absolute;left:1731px;top:901px;width:154.5px;height:49px;background:#E8E9EB;border-radius:4px 4px 0 0"></div>
<div style="position:absolute;left:1885.5px;top:901px;width:2.0px;height:49px;background:#CED3D6;border-radius:2px 2px 0 0"></div>
<div style="position:absolute;left:1887.5px;top:901px;width:96.5px;height:49px;background:#E8E9EB;border-radius:4px 4px 0 0"></div>
<div style="position:absolute;left:1984px;top:901px;width:2px;height:49px;background:#CED3D6;border-radius:2px 2px 0 0"></div>
<div style="position:absolute;left:1986px;top:901px;width:124.5px;height:49px;background:#E8E9EB;border-radius:4px 4px 0 0"></div>
<div style="position:absolute;left:2110.5px;top:901px;width:2.0px;height:49px;background:#CED3D6;border-radius:2px 2px 0 0"></div>
<div style="position:absolute;left:2112.5px;top:901px;width:196.5px;height:49px;background:#E8E9EB;border-radius:4px 4px 0 0"></div>
<div style="position:absolute;left:2309px;top:901px;width:2px;height:49px;background:#CED3D6;border-radius:2px 2px 0 0"></div>
<div style="position:absolute;left:1548.60px;top:910.5px;font:700 24.52px/25px 'Liberation Sans',sans-serif;color:#000;white-space:pre;letter-spacing:0px;">Files</div>
<div style="position:absolute;left:1647.00px;top:910.5px;font:700 24.54px/25px 'Liberation Sans',sans-serif;color:#000;white-space:pre;letter-spacing:0px;">Plots</div>
<div style="position:absolute;left:1750.70px;top:910.5px;font:700 24.54px/25px 'Liberation Sans',sans-serif;color:#000;white-space:pre;letter-spacing:0px;">Packages</div>
<div style="position:absolute;left:1907.50px;top:909.5px;font:700 25.64px/26px 'Liberation Sans',sans-serif;color:#000;white-space:pre;letter-spacing:0px;">Help</div>
<div style="position:absolute;left:2005.00px;top:909.5px;font:700 26.26px/26px 'Liberation Sans',sans-serif;color:#000;white-space:pre;letter-spacing:0px;">Viewer</div>
<div style="position:absolute;left:2131.80px;top:909.5px;font:700 25.63px/26px 'Liberation Sans',sans-serif;color:#000;white-space:pre;letter-spacing:0px;">Presentation</div>
<svg style="position:absolute;left:2602px;top:916px;" width="72" height="28" viewBox="0 0 72 28"><rect x="1.3" y="14.3" width="28.5" height="11" rx="2.5" fill="none" stroke="#7E868C" stroke-width="2.6"/><rect x="1.3" y="14.3" width="28.5" height="4" fill="#7E868C"/><rect x="41.3" y="1.3" width="28" height="24.5" rx="2.5" fill="none" stroke="#7E868C" stroke-width="2.6"/><rect x="41.3" y="1.3" width="28" height="4.5" fill="#7E868C"/></svg>
<div style="position:absolute;left:1528px;top:952px;width:1164px;height:46px;background:#F1F6F6"></div>
<div style="position:absolute;left:1528px;top:998px;width:1164px;height:2px;background:#CED3D6"></div>
<div style="position:absolute;left:1528px;top:1000px;width:1164px;height:44px;background:#F1F6F6"></div>
<div style="position:absolute;left:1528px;top:1044px;width:1164px;height:2px;background:#CED3D6"></div>
<div style="position:absolute;left:1528px;top:1046px;width:1164px;height:40px;background:#F1F6F6"></div>
<div style="position:absolute;left:1528px;top:1086px;width:1164px;height:2px;background:#CED3D6"></div>
<div style="position:absolute;left:1592.3px;top:1046px;width:1.599999999999909px;height:40px;background:#CED3D6"></div>
<div style="position:absolute;left:1649px;top:1046px;width:1.599999999999909px;height:40px;background:#CED3D6"></div>
<div style="position:absolute;left:2162px;top:1046px;width:1.599999999999909px;height:40px;background:#CED3D6"></div>
<div style="position:absolute;left:2338px;top:1046px;width:1.599999999999909px;height:40px;background:#CED3D6"></div>
<svg style="position:absolute;left:1546px;top:960px;" width="38" height="31" viewBox="0 0 38 31"><defs><linearGradient id="fg2" x1="0" y1="0" x2="0" y2="1"><stop offset="0" stop-color="#F7EBA8"/><stop offset="1" stop-color="#E2AE2E"/></linearGradient></defs><path d="M10 4 L14 1.5 H31 L35 5 V28 H10Z" fill="#E3E4E6" stroke="#C9A032" stroke-width="1.2"/><rect x="2" y="9" width="29" height="20.5" rx="1.5" fill="url(#fg2)" stroke="#C29A30" stroke-width="1.2"/></svg>
<svg style="position:absolute;left:1540.2px;top:959.2px;" width="23.6" height="23.6" viewBox="0 0 23.6 23.6"><circle cx="11.8" cy="11.8" r="10.8" fill="#17A06A"/><path d="M11.8 5.200000000000001 V18.4 M5.200000000000001 11.8 H18.4" stroke="#fff" stroke-width="5"/></svg>
<div style="position:absolute;left:1591.50px;top:961.7px;font:400 25.27px/25px 'Liberation Sans',sans-serif;color:#000;white-space:pre;letter-spacing:0px;-webkit-text-stroke:0.3px #000;">Folder</div>
<div style="position:absolute;left:1686px;top:958px;width:2px;height:36px;background:linear-gradient(90deg,#C9CED2,#FFFFFF)"></div>
<div style="position:absolute;left:1712px;top:962px;width:26px;height:29px;background:#fff;border:1.5px solid #CDD2DA;border-radius:2px;box-sizing:border-box"></div>
<svg style="position:absolute;left:1699.9px;top:959.2px;" width="23.6" height="23.6" viewBox="0 0 23.6 23.6"><circle cx="11.8" cy="11.8" r="10.8" fill="#0F9B5A"/><path d="M11.8 5.200000000000001 V18.4 M5.200000000000001 11.8 H18.4" stroke="#fff" stroke-width="5"/></svg>
<div style="position:absolute;left:1748.70px;top:961.7px;font:400 24.73px/25px 'Liberation Sans',sans-serif;color:#000;white-space:pre;letter-spacing:0px;-webkit-text-stroke:0.3px #000;">Blank File</div>
<svg style="position:absolute;left:1874px;top:975px;" width="11" height="6" viewBox="0 0 11 6"><path d="M0 0 H11 L5.5 6Z" fill="#000"/></svg>
<div style="position:absolute;left:1903px;top:958px;width:2px;height:36px;background:linear-gradient(90deg,#C9CED2,#FFFFFF)"></div>
<div style="position:absolute;left:1930px;top:963px;width:24px;height:28px;background:#fff;border:1.5px solid #8A9099;border-radius:2px;box-sizing:border-box"></div>
<svg style="position:absolute;left:1917px;top:959px;" width="24" height="24" viewBox="0 0 24 24"><defs><linearGradient id="ug" x1="0" y1="0" x2="0" y2="1"><stop offset="0" stop-color="#E3B73E"/><stop offset="1" stop-color="#B08414"/></linearGradient></defs><circle cx="12" cy="12" r="10.8" fill="url(#ug)"/><path d="M12 4.5 L19 12 H15 V18.5 H9 V12 H5Z" fill="#fff"/></svg>
<div style="position:absolute;left:1967.70px;top:961.7px;font:400 24.94px/25px 'Liberation Sans',sans-serif;color:#000;white-space:pre;letter-spacing:0px;-webkit-text-stroke:0.3px #000;">Upload</div>
<div style="position:absolute;left:2071px;top:958px;width:2px;height:36px;background:linear-gradient(90deg,#C9CED2,#FFFFFF)"></div>
<div style="position:absolute;left:2097px;top:962px;width:26px;height:29px;background:#fff;border:1.5px solid #CDD2DA;border-radius:2px;box-sizing:border-box"></div>
<svg style="position:absolute;left:2085px;top:959px;" width="24" height="24" viewBox="0 0 24 24"><defs><linearGradient id="xg" x1="0" y1="0" x2="1" y2="1"><stop offset="0" stop-color="#D03A30"/><stop offset="1" stop-color="#951410"/></linearGradient></defs><circle cx="12" cy="12" r="10.8" fill="url(#xg)"/><path d="M7 7 L17 17 M17 7 L7 17" stroke="#fff" stroke-width="3.6"/></svg>
<div style="position:absolute;left:2135.00px;top:961.7px;font:400 24.96px/25px 'Liberation Sans',sans-serif;color:#000;white-space:pre;letter-spacing:0px;-webkit-text-stroke:0.3px #000;">Delete</div>
<svg style="position:absolute;left:2234px;top:962px;" width="38" height="30" viewBox="0 0 38 30"><rect x="1.6" y="1" width="21.3" height="22.7" rx="1.6" fill="#fff" stroke="#A9AFB8" stroke-width="1.5"/><rect x="15.1" y="5.6" width="21.3" height="22.6" rx="1.6" fill="#fff" stroke="#9AA1AB" stroke-width="1.5"/><path d="M9.5 13.6 H21.3 V9.1 L28.8 16.8 L21.3 24 V20 H9.5Z" fill="#02A2E9"/></svg>
<div style="position:absolute;left:2280.60px;top:962.7px;font:400 24.05px/24px 'Liberation Sans',sans-serif;color:#000;white-space:pre;letter-spacing:0px;-webkit-text-stroke:0.3px #000;">Rename</div>
<div style="position:absolute;left:2396px;top:958px;width:2px;height:36px;background:linear-gradient(90deg,#C9CED2,#FFFFFF)"></div>
<svg style="position:absolute;left:2415px;top:958px;" width="34" height="34" viewBox="0 0 34 34"><defs><radialGradient id="bgr" gradientUnits="userSpaceOnUse" cx="13.5" cy="14" r="19"><stop offset="0" stop-color="#8CF2F8"/><stop offset="0.5" stop-color="#3DB0D8"/><stop offset="1" stop-color="#1F8EC2"/></radialGradient></defs><path d="M16.90,0.20 L17.55,0.28 L18.17,0.50 L18.77,0.88 L19.33,1.38 L19.82,2.01 L20.25,2.74 L20.61,3.55 L20.89,4.42 L21.09,5.34 L21.22,6.26 L21.97,5.70 L22.76,5.20 L23.57,4.78 L24.40,4.46 L25.22,4.25 L26.01,4.15 L26.76,4.19 L27.45,4.35 L28.06,4.63 L28.57,5.03 L28.97,5.54 L29.25,6.15 L29.41,6.84 L29.45,7.59 L29.35,8.38 L29.14,9.20 L28.82,10.03 L28.40,10.84 L27.90,11.63 L27.34,12.38 L28.26,12.51 L29.18,12.71 L30.05,12.99 L30.86,13.35 L31.59,13.78 L32.22,14.27 L32.72,14.83 L33.10,15.43 L33.32,16.05 L33.40,16.70 L33.32,17.35 L33.10,17.97 L32.72,18.57 L32.22,19.13 L31.59,19.62 L30.86,20.05 L30.05,20.41 L29.18,20.69 L28.26,20.89 L27.34,21.02 L27.90,21.77 L28.40,22.56 L28.82,23.37 L29.14,24.20 L29.35,25.02 L29.45,25.81 L29.41,26.56 L29.25,27.25 L28.97,27.86 L28.57,28.37 L28.06,28.77 L27.45,29.05 L26.76,29.21 L26.01,29.25 L25.22,29.15 L24.40,28.94 L23.57,28.62 L22.76,28.20 L21.97,27.70 L21.22,27.14 L21.09,28.06 L20.89,28.98 L20.61,29.85 L20.25,30.66 L19.82,31.39 L19.33,32.02 L18.77,32.52 L18.17,32.90 L17.55,33.12 L16.90,33.20 L16.25,33.12 L15.63,32.90 L15.03,32.52 L14.47,32.02 L13.98,31.39 L13.55,30.66 L13.19,29.85 L12.91,28.98 L12.71,28.06 L12.58,27.14 L11.83,27.70 L11.04,28.20 L10.23,28.62 L9.40,28.94 L8.58,29.15 L7.79,29.25 L7.04,29.21 L6.35,29.05 L5.74,28.77 L5.23,28.37 L4.83,27.86 L4.55,27.25 L4.39,26.56 L4.35,25.81 L4.45,25.02 L4.66,24.20 L4.98,23.37 L5.40,22.56 L5.90,21.77 L6.46,21.02 L5.54,20.89 L4.62,20.69 L3.75,20.41 L2.94,20.05 L2.21,19.62 L1.58,19.13 L1.08,18.57 L0.70,17.97 L0.48,17.35 L0.40,16.70 L0.48,16.05 L0.70,15.43 L1.08,14.83 L1.58,14.27 L2.21,13.78 L2.94,13.35 L3.75,12.99 L4.62,12.71 L5.54,12.51 L6.46,12.38 L5.90,11.63 L5.40,10.84 L4.98,10.03 L4.66,9.20 L4.45,8.38 L4.35,7.59 L4.39,6.84 L4.55,6.15 L4.83,5.54 L5.23,5.03 L5.74,4.63 L6.35,4.35 L7.04,4.19 L7.79,4.15 L8.58,4.25 L9.40,4.46 L10.23,4.78 L11.04,5.20 L11.83,5.70 L12.58,6.26 L12.71,5.34 L12.91,4.42 L13.19,3.55 L13.55,2.74 L13.98,2.01 L14.47,1.38 L15.03,0.88 L15.63,0.50 L16.25,0.28 Z" fill="url(#bgr)" stroke="#43525E" stroke-width="1.1" stroke-linejoin="round"/><circle cx="16.9" cy="16.7" r="3.9" fill="#F1F6F6" stroke="#4A5660" stroke-width="1.1"/></svg>
<svg style="position:absolute;left:2465px;top:974px;" width="11" height="6" viewBox="0 0 11 6"><path d="M0 0 H11 L5.5 6Z" fill="#000"/></svg>
<svg style="position:absolute;left:2647px;top:956px;" width="36" height="36" viewBox="0 0 36 36"><defs><linearGradient id="rfg" x1="0" y1="0" x2="1" y2="1"><stop offset="0" stop-color="#F1F2F6"/><stop offset="1" stop-color="#DAE6F8"/></linearGradient></defs><path d="M25.25,21.67 A8.25 8.25 0 1 1 23.2,10.5 L18.9,15.4 L33,16 L33,2 L28.7,4.7 A16.2 16.2 0 1 0 31.99,25.88 A3.97 3.97 0 0 0 25.25,21.67 Z" fill="url(#rfg)" stroke="#9BA3AE" stroke-width="1.3" stroke-linejoin="round"/></svg>
<div style="position:absolute;left:1539.5px;top:1009.5px;width:28.0px;height:27.0px;background:#fff;border:2px solid #9B9B9B;border-radius:6px;box-sizing:border-box"></div>
<svg style="position:absolute;left:1578px;top:1005px;" width="48" height="34" viewBox="0 0 48 34"><path d="M9 32 C3.5 32 1.5 28 1.5 24.5 C1.5 20 5 17 8.5 17 C9 9 14 4 21 4 C26.5 4 30.5 7.5 32 11 C33 9.5 35 9 36.5 9 C40 9 42.5 12 42 15.5 C45 16.5 47 19.5 47 23.5 C47 28.5 43.5 32 39 32Z" fill="#1A8CC8"/></svg>
<div style="position:absolute;left:1637.20px;top:1010.8px;font:400 25.41px/25px 'Liberation Sans',sans-serif;color:#0B2FB0;white-space:pre;letter-spacing:0px;-webkit-text-stroke:0.3px #0B2FB0;">Cloud</div>
<svg style="position:absolute;left:1716px;top:1013px;" width="14" height="22" viewBox="0 0 14 22"><path d="M2 2 L11 11 L2 20" fill="none" stroke="#BFC3C8" stroke-width="2.2"/></svg>
<div style="position:absolute;left:1743.00px;top:1009.8px;font:400 27.00px/27px 'Liberation Sans',sans-serif;color:#0B2FB0;white-space:pre;letter-spacing:0px;-webkit-text-stroke:0.3px #0B2FB0;">project</div>
<svg style="position:absolute;left:2600px;top:1004px;" width="34" height="34" viewBox="0 0 34 34"><path d="M17 1.5 L32 6.5 V27.5 L17 32.5 L2 27.5 V6.5Z" fill="#B3E2F8" stroke="#62C2DC" stroke-width="1.3"/><path d="M2 6.5 L17 11 L32 6.5 M2 27.5 L17 23 L32 27.5" fill="none" stroke="#7ACDE3" stroke-width="1"/><path d="M17 2 V32" stroke="#6CC6DE" stroke-width="1.4"/><text x="17" y="22.5" text-anchor="middle" font-family="Liberation Serif" font-size="20" fill="#2F5DA8">R</text></svg>
<div style="position:absolute;left:2648px;top:1000px;width:2px;height:44px;background:#CED3D6"></div>
<svg style="position:absolute;left:2662px;top:1024px;" width="24" height="10" viewBox="0 0 24 10"><circle cx="3.5" cy="5" r="2.6" fill="#000"/><circle cx="12" cy="5" r="2.6" fill="#000"/><circle cx="20.5" cy="5" r="2.6" fill="#000"/></svg>
<svg style="position:absolute;left:1661px;top:1056px;" width="24" height="17" viewBox="0 0 24 17"><path d="M1.3 16 L11.5 1.5 L22.7 16Z" fill="#6F7886"/></svg>
<div style="position:absolute;left:1695.00px;top:1055.1px;font:400 24.09px/24px 'Liberation Sans',sans-serif;color:#2A323A;white-space:pre;letter-spacing:0px;-webkit-text-stroke:0.3px #2A323A;">Name</div>
<div style="position:absolute;left:2169.30px;top:1055.1px;font:400 23.56px/24px 'Liberation Sans',sans-serif;color:#2A323A;white-space:pre;letter-spacing:0px;-webkit-text-stroke:0.3px #2A323A;">Size</div>
<div style="position:absolute;left:2345.80px;top:1053.1px;font:400 26.54px/27px 'Liberation Sans',sans-serif;color:#2A323A;white-space:pre;letter-spacing:0px;-webkit-text-stroke:0.3px #2A323A;">Modified</div>
<svg style="position:absolute;left:1608px;top:1093px;" width="31" height="31" viewBox="0 0 31 31"><path d="M1 13 L12 1.5 L23 13 H16.5 V22.5 H30 V29.5 H8.5 V13Z" fill="#2DBE6C" stroke="#22A85C" stroke-width="1" stroke-linejoin="round"/></svg>
<div style="position:absolute;left:1659.00px;top:1102.5px;font:400 24.11px/24px 'Liberation Sans',sans-serif;color:#000099;white-space:pre;letter-spacing:0px;-webkit-text-stroke:0.3px #000099;">..</div>
<div style="position:absolute;left:1552.5px;top:1146.8px;width:28.0px;height:27.0px;background:#fff;border:2px solid #9B9B9B;border-radius:6px;box-sizing:border-box"></div>
<svg style="position:absolute;left:1611px;top:1140.8px;" width="30" height="34" viewBox="0 0 30 34"><path d="M1.2 1.2 H19.5 L28.6 10 V32.8 H1.2Z" fill="#fff" stroke="#A8A8A8" stroke-width="1.15" stroke-linejoin="round"/><path d="M19.5 1.2 V10 H28.6" fill="none" stroke="#A8A8A8" stroke-width="1.15"/></svg>
<svg style="position:absolute;left:1605px;top:1144.8px;" width="24" height="24" viewBox="0 0 24 24"><defs><linearGradient id="cg" x1="0" y1="0" x2="0" y2="1"><stop offset="0" stop-color="#FFFFFF"/><stop offset="1" stop-color="#D5DDE8"/></linearGradient></defs><circle cx="11.5" cy="11.5" r="9.3" fill="url(#cg)" stroke="#8A93A0" stroke-width="1.5"/><path d="M10.3 6 V12.3 H14.8" fill="none" stroke="#000" stroke-width="1.35"/></svg>
<div style="position:absolute;left:1659.00px;top:1147.8px;font:400 28.31px/28px 'Liberation Sans',sans-serif;color:#000099;white-space:pre;letter-spacing:0px;-webkit-text-stroke:0.3px #000099;">.Rhistory</div>
<div style="position:absolute;left:2171.80px;top:1148.8px;font:400 27.60px/28px 'Liberation Sans',sans-serif;color:#000;white-space:pre;letter-spacing:0px;-webkit-text-stroke:0.3px #000;">0 B</div>
<div style="position:absolute;left:2347.30px;top:1147.8px;font:400 28.28px/28px 'Liberation Sans',sans-serif;color:#000;white-space:pre;letter-spacing:0px;-webkit-text-stroke:0.3px #000;">Sep 15, 2023, 2:52 PM</div>
<div style="position:absolute;left:1552.5px;top:1195.5px;width:28.0px;height:27.0px;background:#fff;border:2px solid #9B9B9B;border-radius:6px;box-sizing:border-box"></div>
<svg style="position:absolute;left:1607px;top:1191.5px;" width="34" height="34" viewBox="0 0 34 34"><path d="M17 1.5 L32 6.5 V27.5 L17 32.5 L2 27.5 V6.5Z" fill="#B3E2F8" stroke="#62C2DC" stroke-width="1.3"/><path d="M2 6.5 L17 11 L32 6.5 M2 27.5 L17 23 L32 27.5" fill="none" stroke="#7ACDE3" stroke-width="1"/><path d="M17 2 V32" stroke="#6CC6DE" stroke-width="1.4"/><text x="17" y="22.5" text-anchor="middle" font-family="Liberation Serif" font-size="20" fill="#2F5DA8">R</text></svg>
<div style="position:absolute;left:1659.00px;top:1196.5px;font:400 28.95px/29px 'Liberation Sans',sans-serif;color:#000099;white-space:pre;letter-spacing:0px;-webkit-text-stroke:0.3px #000099;">project.Rproj</div>
<div style="position:absolute;left:2171.80px;top:1197.5px;font:400 27.60px/28px 'Liberation Sans',sans-serif;color:#000;white-space:pre;letter-spacing:0px;-webkit-text-stroke:0.3px #000;">205 B</div>
<div style="position:absolute;left:2347.30px;top:1196.5px;font:400 28.28px/28px 'Liberation Sans',sans-serif;color:#000;white-space:pre;letter-spacing:0px;-webkit-text-stroke:0.3px #000;">Sep 15, 2023, 3:18 PM</div>
<div style="position:absolute;left:1552.5px;top:1244.6px;width:28.0px;height:27.0px;background:#fff;border:2px solid #9B9B9B;border-radius:6px;box-sizing:border-box"></div>
<svg style="position:absolute;left:1611px;top:1238.6px;" width="30" height="34" viewBox="0 0 30 34"><path d="M1.2 1.2 H19.5 L28.6 10 V32.8 H1.2Z" fill="#fff" stroke="#A8A8A8" stroke-width="1.15" stroke-linejoin="round"/><path d="M19.5 1.2 V10 H28.6" fill="none" stroke="#A8A8A8" stroke-width="1.15"/></svg>
<svg style="position:absolute;left:1605px;top:1242.6px;" width="24" height="24" viewBox="0 0 24 24"><circle cx="11.5" cy="11.5" r="9.5" fill="#6A9FD8"/><path d="M11.5 2 V21 M2 11.5 H21" stroke="#fff" stroke-width="1.6"/></svg>
<div style="position:absolute;left:1659.00px;top:1245.6px;font:400 28.77px/29px 'Liberation Sans',sans-serif;color:#000099;white-space:pre;letter-spacing:0px;-webkit-text-stroke:0.3px #000099;">unvotes.qmd</div>
<div style="position:absolute;left:2171.80px;top:1246.6px;font:400 27.60px/28px 'Liberation Sans',sans-serif;color:#000;white-space:pre;letter-spacing:0px;-webkit-text-stroke:0.3px #000;">2.9 KB</div>
<div style="position:absolute;left:2347.30px;top:1245.6px;font:400 28.28px/28px 'Liberation Sans',sans-serif;color:#000;white-space:pre;letter-spacing:0px;-webkit-text-stroke:0.3px #000;">Sep 15, 2023, 3:01 PM</div>
<div style="position:absolute;left:1537px;top:1229px;width:326px;height:65px;border:4.6px solid #E0689C;border-radius:32px;box-sizing:border-box"></div></body></html>
